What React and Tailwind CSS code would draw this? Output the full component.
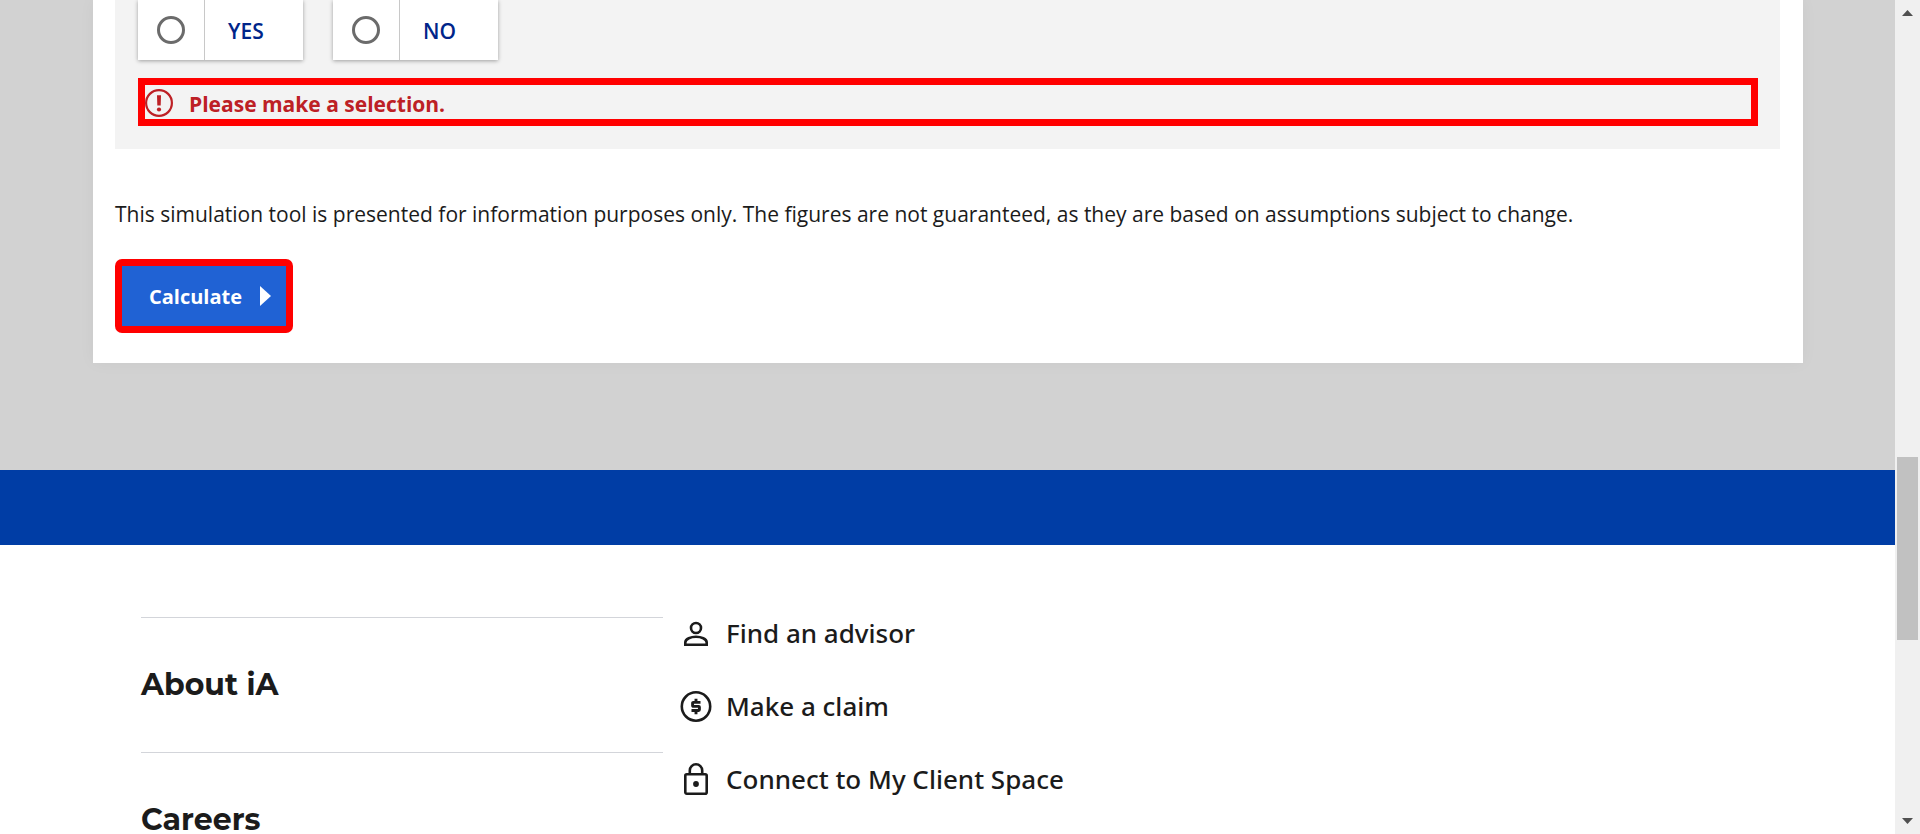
const choices = [
  { id: "yes", label: "YES" },
  { id: "no", label: "NO" },
];

const sections = ["About iA", "Careers"];

function AdvisorIcon() {
  return (
    <svg viewBox="0 0 32 32" className="size-8 shrink-0" fill="none" stroke="currentColor" strokeWidth="2.6" aria-hidden="true">
      <circle cx="16" cy="11" r="5" />
      <path d="M5.300 27.700V25.500C5.300 21.800 11 19.800 16 19.800S26.700 21.800 26.700 25.500V27.700Z" />
    </svg>
  );
}

function ClaimIcon() {
  return (
    <svg viewBox="0 0 32 32" className="size-8 shrink-0" fill="none" stroke="currentColor" aria-hidden="true">
      <circle cx="16" cy="16.500" r="14.200" strokeWidth="2.600" />
      <path d="M20.500 12.400H13.300A.7.7 0 0 0 12.600 13.100V15.700A.7.7 0 0 0 13.300 16.400H18.700A.7.7 0 0 1 19.400 17.100V19.800A.7.7 0 0 1 18.700 20.500H11.500M16 8.700V12.500M16 20.500V24.300" strokeWidth="2.900" />
    </svg>
  );
}

function LockIcon() {
  return (
    <svg viewBox="0 0 32 32" className="size-8 shrink-0" fill="none" stroke="currentColor" strokeWidth="2.600" aria-hidden="true">
      <rect x="5.300" y="11.300" width="21.400" height="19.400" rx="1.500" />
      <path d="M9.800 11.300V7.500A6.200 6.200 0 0 1 22.200 7.500V11.300" />
      <circle cx="16" cy="21" r="2.900" fill="currentColor" stroke="none" />
    </svg>
  );
}

const links = [
  { label: "Find an advisor", Icon: AdvisorIcon },
  { label: "Make a claim", Icon: ClaimIcon },
  { label: "Connect to My Client Space", Icon: LockIcon },
];

function Choice({ id, label }) {
  return (
    <label htmlFor={id} className="flex h-[60px] w-[165px] cursor-pointer bg-white shadow-[0_1px_4px_rgba(0,0,0,0.35)]">
      <span className="flex w-[67px] items-center justify-center border-r border-[#c8c8c8]">
        <input
          id={id}
          name="choice"
          type="radio"
          className="size-7 appearance-none rounded-full border-[3px] border-[#6b6b6b] bg-white checked:bg-[#00258a]"
        />
      </span>
      <span className="flex items-center pt-1 pl-[23px] text-[21px] font-semibold text-[#00258a]">{label}</span>
    </label>
  );
}

function ScrollBar() {
  return (
    <div className="flex w-[25px] shrink-0 flex-col items-center bg-[#f0f0f0]" aria-hidden="true">
      <svg viewBox="0 0 11 6" className="mt-[10px] h-[6px] w-[11px] fill-[#505050]">
        <path d="M5.500 0L11 6H0Z" />
      </svg>
      <div className="flex w-full grow flex-col items-center">
        <div className="grow-[441]" />
        <div className="w-[21px] grow-[183] bg-[#c1c1c1]" />
        <div className="grow-[178]" />
      </div>
      <svg viewBox="0 0 11 6" className="mb-[10px] h-[6px] w-[11px] fill-[#505050]">
        <path d="M0 0H11L5.500 6Z" />
      </svg>
    </div>
  );
}

export default function App() {
  return (
    <div className="flex h-screen overflow-hidden bg-white font-['Open_Sans','Noto_Sans',sans-serif] text-[#1b1b1b]">
      <div className="min-w-0 grow">
        <main className="bg-[#d2d2d2] pr-[92px] pb-[107px] pl-[93px]">
          <form className="bg-white pr-[23px] pb-[30px] pl-[22px] shadow-[0_0_16px_rgba(0,0,0,0.04)]" onSubmit={(e) => e.preventDefault()}>
            <fieldset className="bg-[#f3f3f3] pr-[22px] pb-[23px] pl-[23px]">
              <div className="flex gap-[30px]">
                {choices.map((c) => (
                  <Choice key={c.id} {...c} />
                ))}
              </div>
              <p role="alert" className="mt-[18px] flex h-12 items-center border-[7px] border-[#ff0000] pt-0.5 text-[21px] font-bold text-[#bd2025]">
                <svg viewBox="0 0 28 28" className="mr-4 size-7 shrink-0" aria-hidden="true">
                  <circle cx="14" cy="14" r="12.900" fill="none" stroke="currentColor" strokeWidth="2.200" />
                  <path d="M12 6.200H16L15.700 16.600H12.300Z" fill="currentColor" />
                  <circle cx="14" cy="20.500" r="2.100" fill="currentColor" />
                </svg>
                <span className="pt-1">Please make a selection.</span>
              </p>
            </fieldset>
            <p className="pt-[49px] text-[21px] leading-8">
              This simulation tool is presented for information purposes only. The figures are not guaranteed, as they are based on assumptions subject to change.
            </p>
            <button
              type="submit"
              className="mt-[29px] flex h-[74px] items-center rounded-[7px] bg-[#ff0000] p-[7px] text-[20px] font-bold text-white"
            >
              <span className="flex h-full items-center gap-[18px] bg-[#2062d4] pr-[15px] pl-[27px]">
                <span className="pt-0.5">Calculate</span>
                <svg viewBox="0 0 11 20" className="h-5 w-[11px] fill-white" aria-hidden="true">
                  <path d="M0 0L11 10L0 20Z" />
                </svg>
              </span>
            </button>
          </form>
        </main>
        <div className="h-[75px] bg-[#003da5]" />
        <footer className="flex gap-[17px] px-[141px] pt-[72px]">
          <nav className="w-[522px]" aria-label="Sections">
            {sections.map((s) => (
              <h2 key={s} className="flex h-[135px] items-center border-t border-[#d3d5da] font-['Montserrat','Inter',sans-serif] text-[30px] leading-9 font-bold">
                <a href="#">{s}</a>
              </h2>
            ))}
          </nav>
          <ul>
            {links.map(({ label, Icon }) => (
              <li key={label} className="h-[73px]">
                <a href="#" className="flex items-center gap-[14px] font-['Noto_Sans',sans-serif] text-[26px] leading-8 font-medium">
                  <Icon />
                  {label}
                </a>
              </li>
            ))}
          </ul>
        </footer>
      </div>
      <ScrollBar />
    </div>
  );
}
